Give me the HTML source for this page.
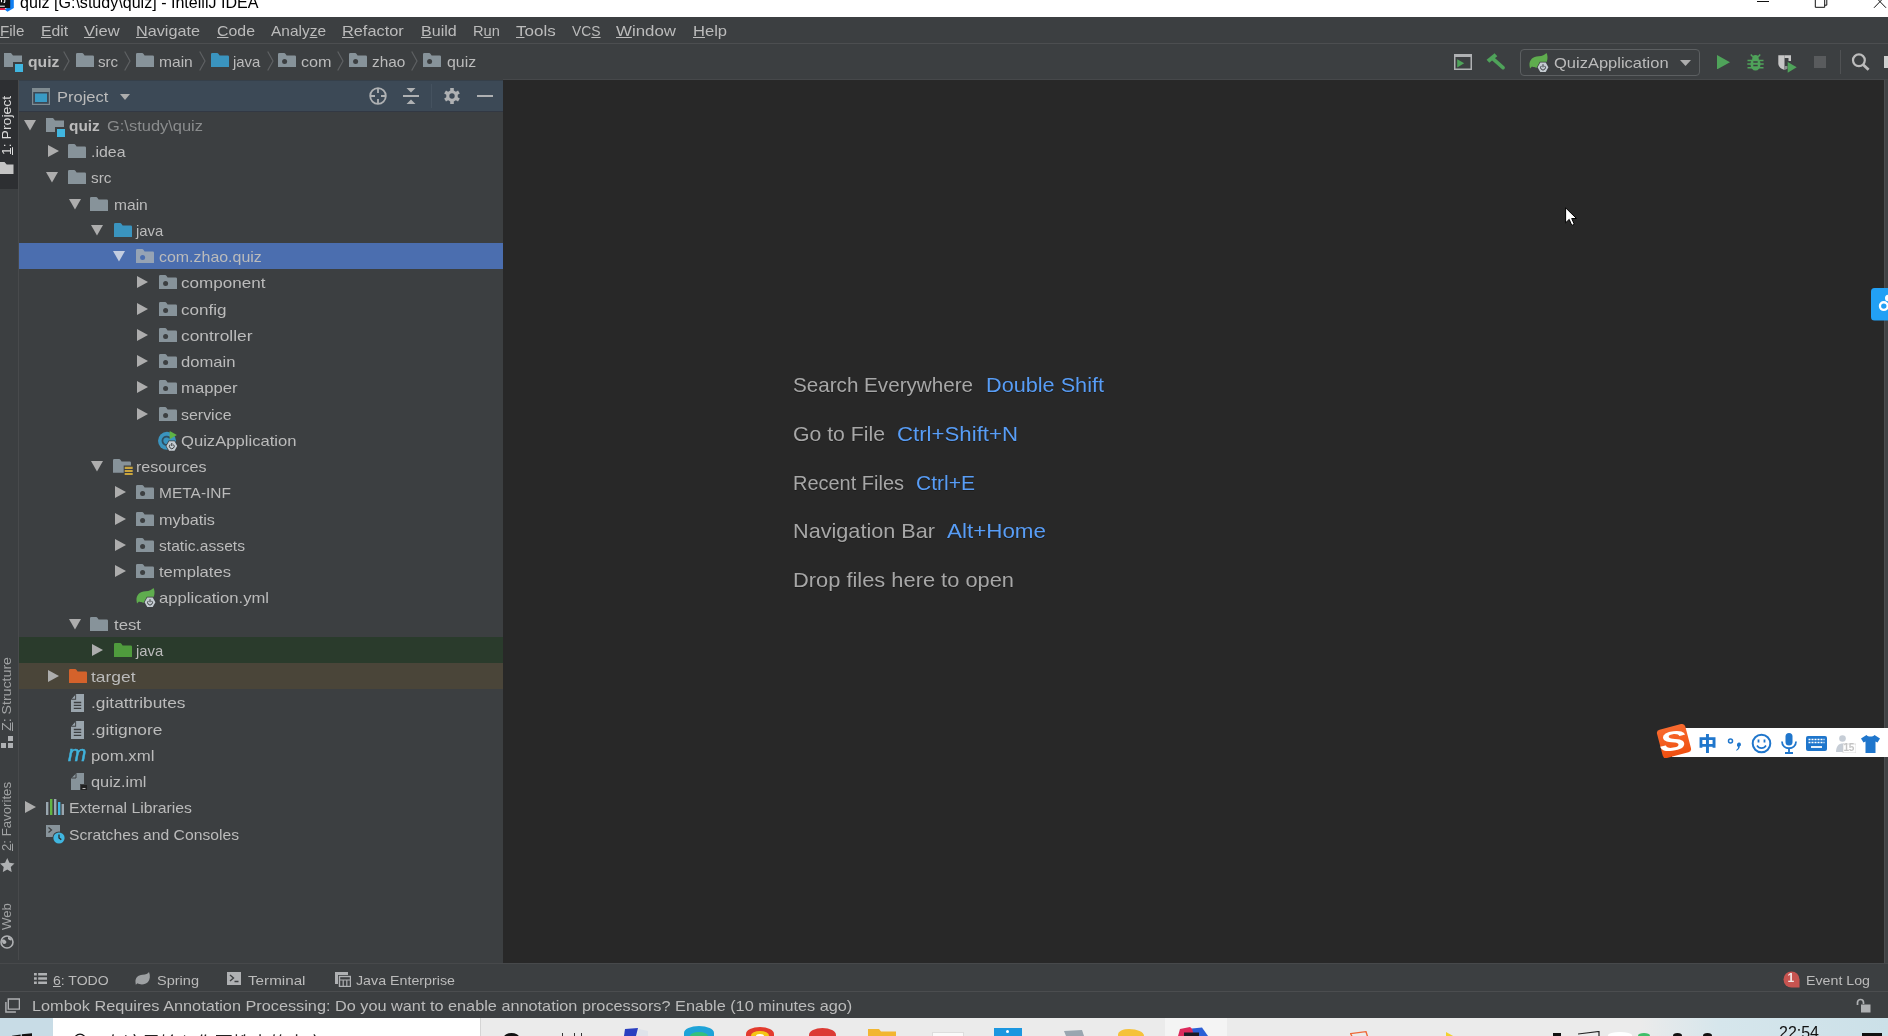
<!DOCTYPE html>
<html><head><meta charset="utf-8"><title>quiz [G:\study\quiz] - IntelliJ IDEA</title>
<style>
html,body{margin:0;padding:0}
body{width:1888px;height:1036px;overflow:hidden;position:relative;background:#3c3f41;font-family:"Liberation Sans", sans-serif}
.a{position:absolute;display:block}
.t{position:absolute;white-space:pre;line-height:20px;font-family:"Liberation Sans", sans-serif}
u{text-decoration:underline;text-underline-offset:1px;text-decoration-thickness:1px}
</style></head><body>
<div id="root" style="position:absolute;left:0;top:0;width:1888px;height:1036px;will-change:transform">
<div class="a" style="left:0px;top:0px;width:1888px;height:17px;background:#ffffff;"></div><svg class="a" style="left:0;top:0" width="14" height="12" viewBox="0 0 14 12"><path d="M9 0H13.800V8L7.500 11.700L4.500 9.500L9 7z" fill="#0f7ff2"/><path d="M0 7.500H4.500L5.500 10H0z" fill="#e8234f"/><rect x="0" y="0" width="10.200" height="8.100" fill="#111"/><rect x="0" y="5.700" width="4.800" height="1" fill="#fff"/><path d="M1.500 0v2.300M4.800 0v1.500q0 1-1.200 .9" stroke="#fff" stroke-width="1.100" fill="none"/></svg><span class="t" style="left:19.5px;top:-7.00px;font-size:17px;color:#000000;transform-origin:0 50%;transform:scaleX(0.9454);">quiz [G:\study\quiz] - IntelliJ IDEA</span><div class="a" style="left:1757px;top:1px;width:12px;height:1px;background:#111;"></div><svg class="a" style="left:1813px;top:0" width="16" height="10" viewBox="0 0 16 10"><path d="M2.300 -3V7.300H11.700V-3M11.700 5.200H13.800V-3" fill="none" stroke="#111" stroke-width="1"/></svg><svg class="a" style="left:1872px;top:0" width="16" height="10" viewBox="0 0 16 10"><path d="M2 7.800L14 -4.600M14 7.800L2 -4.600" fill="none" stroke="#111" stroke-width="1"/></svg><div class="a" style="left:0px;top:17px;width:1888px;height:27px;background:#3c3f41;"></div><div class="a" style="left:0px;top:43px;width:1888px;height:1px;background:#4c4e50;"></div><span class="t" style="left:0px;top:21.00px;font-size:14.6px;color:#bbbbbb;transform-origin:0 50%;transform:scaleX(1.0369);"><u>F</u>ile</span><span class="t" style="left:41.4px;top:21.00px;font-size:14.6px;color:#bbbbbb;transform-origin:0 50%;transform:scaleX(1.0812);"><u>E</u>dit</span><span class="t" style="left:84px;top:21.00px;font-size:14.6px;color:#bbbbbb;transform-origin:0 50%;transform:scaleX(1.1341);"><u>V</u>iew</span><span class="t" style="left:136px;top:21.00px;font-size:14.6px;color:#bbbbbb;transform-origin:0 50%;transform:scaleX(1.1109);"><u>N</u>avigate</span><span class="t" style="left:217px;top:21.00px;font-size:14.6px;color:#bbbbbb;transform-origin:0 50%;transform:scaleX(1.0886);"><u>C</u>ode</span><span class="t" style="left:271px;top:21.00px;font-size:14.6px;color:#bbbbbb;transform-origin:0 50%;transform:scaleX(1.0590);">Analy<u>z</u>e</span><span class="t" style="left:342.1px;top:21.00px;font-size:14.6px;color:#bbbbbb;transform-origin:0 50%;transform:scaleX(1.1183);"><u>R</u>efactor</span><span class="t" style="left:421px;top:21.00px;font-size:14.6px;color:#bbbbbb;transform-origin:0 50%;transform:scaleX(1.1000);"><u>B</u>uild</span><span class="t" style="left:472.8px;top:21.00px;font-size:14.6px;color:#bbbbbb;transform-origin:0 50%;transform:scaleX(1.0038);">R<u>u</u>n</span><span class="t" style="left:516.2px;top:21.00px;font-size:14.6px;color:#bbbbbb;transform-origin:0 50%;transform:scaleX(1.1650);"><u>T</u>ools</span><span class="t" style="left:572px;top:21.00px;font-size:14.6px;color:#bbbbbb;transform-origin:0 50%;transform:scaleX(0.9528);">VC<u>S</u></span><span class="t" style="left:616px;top:21.00px;font-size:14.6px;color:#bbbbbb;transform-origin:0 50%;transform:scaleX(1.1556);"><u>W</u>indow</span><span class="t" style="left:692.5px;top:21.00px;font-size:14.6px;color:#bbbbbb;transform-origin:0 50%;transform:scaleX(1.1355);"><u>H</u>elp</span><div class="a" style="left:0px;top:44px;width:1888px;height:36px;background:#3c3f41;"></div><svg class="a" style="left:4px;top:53px" width="20" height="19" viewBox="0 0 20 19"><path d="M0 0h7l2 2.6h9V9H9v5H0z" fill="#87939a"/><rect x="11" y="11" width="8" height="8" fill="#40b6e0"/></svg><span class="t" style="left:27.6px;top:52.00px;font-size:14.6px;color:#bbbbbb;font-weight:bold;transform-origin:0 50%;transform:scaleX(1.0758);">quiz</span><svg class="a" style="left:63px;top:51px" width="7" height="20" viewBox="0 0 7 20"><path d="M0.7 0.5L6 10L0.7 19.5" fill="none" stroke="#5e6163" stroke-width="1.2"/></svg><svg class="a" style="left:76px;top:53px" width="18" height="14" viewBox="0 0 18 14"><path d="M0 1.300Q0 0 1.300 0H6Q7 0 7.600 1L8.600 2.600H16.800Q18 2.600 18 3.800V14H0z" fill="#87939a"/></svg><span class="t" style="left:98.4px;top:52.00px;font-size:14.6px;color:#bbbbbb;transform-origin:0 50%;transform:scaleX(1.0376);">src</span><svg class="a" style="left:124px;top:51px" width="7" height="20" viewBox="0 0 7 20"><path d="M0.7 0.5L6 10L0.7 19.5" fill="none" stroke="#5e6163" stroke-width="1.2"/></svg><svg class="a" style="left:136px;top:53px" width="18" height="14" viewBox="0 0 18 14"><path d="M0 1.300Q0 0 1.300 0H6Q7 0 7.600 1L8.600 2.600H16.800Q18 2.600 18 3.800V14H0z" fill="#87939a"/></svg><span class="t" style="left:158.6px;top:52.00px;font-size:14.6px;color:#bbbbbb;transform-origin:0 50%;transform:scaleX(1.0682);">main</span><svg class="a" style="left:199px;top:51px" width="7" height="20" viewBox="0 0 7 20"><path d="M0.7 0.5L6 10L0.7 19.5" fill="none" stroke="#5e6163" stroke-width="1.2"/></svg><svg class="a" style="left:211px;top:53px" width="18" height="14" viewBox="0 0 18 14"><path d="M0 1.300Q0 0 1.300 0H6Q7 0 7.600 1L8.600 2.600H16.800Q18 2.600 18 3.800V14H0z" fill="#3a94bf"/></svg><span class="t" style="left:233px;top:52.00px;font-size:14.6px;color:#bbbbbb;transform-origin:0 50%;transform:scaleX(1.0231);">java</span><svg class="a" style="left:267px;top:51px" width="7" height="20" viewBox="0 0 7 20"><path d="M0.7 0.5L6 10L0.7 19.5" fill="none" stroke="#5e6163" stroke-width="1.2"/></svg><svg class="a" style="left:278px;top:53px" width="18" height="14" viewBox="0 0 18 14"><path d="M0 1.300Q0 0 1.300 0H6Q7 0 7.600 1L8.600 2.600H16.800Q18 2.600 18 3.800V14H0z" fill="#87939a"/><circle cx="6.600" cy="8.400" r="2.500" fill="#3c3f41"/></svg><span class="t" style="left:301.4px;top:52.00px;font-size:14.6px;color:#bbbbbb;transform-origin:0 50%;transform:scaleX(1.1096);">com</span><svg class="a" style="left:337px;top:51px" width="7" height="20" viewBox="0 0 7 20"><path d="M0.7 0.5L6 10L0.7 19.5" fill="none" stroke="#5e6163" stroke-width="1.2"/></svg><svg class="a" style="left:349px;top:53px" width="18" height="14" viewBox="0 0 18 14"><path d="M0 1.300Q0 0 1.300 0H6Q7 0 7.600 1L8.600 2.600H16.800Q18 2.600 18 3.800V14H0z" fill="#87939a"/><circle cx="6.600" cy="8.400" r="2.500" fill="#3c3f41"/></svg><span class="t" style="left:372.3px;top:52.00px;font-size:14.6px;color:#bbbbbb;transform-origin:0 50%;transform:scaleX(1.0519);">zhao</span><svg class="a" style="left:411px;top:51px" width="7" height="20" viewBox="0 0 7 20"><path d="M0.7 0.5L6 10L0.7 19.5" fill="none" stroke="#5e6163" stroke-width="1.2"/></svg><svg class="a" style="left:423px;top:53px" width="18" height="14" viewBox="0 0 18 14"><path d="M0 1.300Q0 0 1.300 0H6Q7 0 7.600 1L8.600 2.600H16.800Q18 2.600 18 3.800V14H0z" fill="#87939a"/><circle cx="6.600" cy="8.400" r="2.500" fill="#3c3f41"/></svg><span class="t" style="left:446.8px;top:52.00px;font-size:14.6px;color:#bbbbbb;transform-origin:0 50%;transform:scaleX(1.0866);">quiz</span><svg class="a" style="left:1454px;top:54px" width="18" height="16" viewBox="0 0 18 16"><path d="M0 0h18v16H0zM1.500 3v11.500h15V3z" fill="#afb1b3" fill-rule="evenodd"/><path d="M3.200 5.200v8.200l7-4.100z" fill="#4fa35a"/></svg><svg class="a" style="left:1486px;top:53px" width="19" height="17" viewBox="0 0 19 17"><g fill="#4fa35a" stroke="none"><path d="M0.600 6.800L8.600 0.300L11.300 3.300L3.300 9.800z"/></g><path d="M6.800 5.600L17 14.700" stroke="#4fa35a" stroke-width="3.600" stroke-linecap="round"/></svg><div class="a" style="left:1520px;top:48.5px;width:179.5px;height:27px;background:transparent;box-sizing:border-box;border:1px solid #5c5f61;border-radius:4px"></div><svg class="a" style="left:1528.5px;top:53px" width="21" height="21" viewBox="0 0 21 21"><path d="M0.500 12.500C0 7 4 3.500 9.500 3.300C13.500 3.100 15.500 2 17.500 0C19.500 4 18.500 9 15.500 12C12.500 15 6 15.500 3 13.500L1 15.500z" fill="#5fad4e"/><path d="M7.80 14.3L10.90 8.70H17.10L20.20 14.3L17.10 19.90H10.90z" fill="#3c3f41"/><path d="M8.60 14.3L11.30 9.50H16.70L19.40 14.3L16.70 19.10H11.30z" fill="#c5ccd2"/><path d="M14 11.20v3" stroke="#3c3f41" stroke-width="1.100"/><path d="M12.30 12.90a2.400 2.400 0 1 0 3.400 0" fill="none" stroke="#3c3f41" stroke-width="1"/></svg><span class="t" style="left:1553.9px;top:53.00px;font-size:14.6px;color:#bbbbbb;transform-origin:0 50%;transform:scaleX(1.1301);">QuizApplication</span><svg class="a" style="left:1679.5px;top:59.5px" width="11" height="6" viewBox="0 0 11 6"><path d="M0 0h11L5.5 6z" fill="#adadad"/></svg><svg class="a" style="left:1716.5px;top:55px" width="13" height="14" viewBox="0 0 13 14"><path d="M0 0v14.400L13 7.200z" fill="#4fa35a"/></svg><svg class="a" style="left:1746.500px;top:54px" width="17" height="17" viewBox="0 0 17 17"><g stroke="#4fa35a" stroke-width="1.500" fill="none"><path d="M5.800 2.800L3.800 0.500M11.200 2.800L13.200 0.500M0.500 6.500h16M0.300 10h16.400M0.500 13.700h16"/></g><circle cx="8.500" cy="4.200" r="3.200" fill="#4fa35a"/><ellipse cx="8.500" cy="10.200" rx="5" ry="6.300" fill="#4fa35a"/><path d="M6.300 8h4.400M6.300 11.500h4.400" stroke="#3c3f41" stroke-width="1.300"/></svg><svg class="a" style="left:1778px;top:54.500px" width="19" height="18" viewBox="0 0 19 18"><path d="M0.300 0.300H6.500V15C3.500 14 0.300 12 0.300 8.500z" fill="#c6c6c6"/><path d="M6.500 0.300H13V6H10.500V3H6.500z" fill="#c6c6c6"/><path d="M6.500 15C8 14.500 9 14 9.500 13.500V11H6.500z" fill="#8e9092"/><path d="M9.700 7v10.700l9-5.350z" fill="#4fa35a"/></svg><div class="a" style="left:1813.5px;top:56px;width:12.5px;height:12px;background:#595b5d;"></div><div class="a" style="left:1840px;top:50px;width:1px;height:24px;background:#505254;"></div><svg class="a" style="left:1851px;top:52px" width="20" height="20" viewBox="0 0 20 20"><circle cx="7.900" cy="8.300" r="5.900" fill="none" stroke="#bcbcbc" stroke-width="2.200"/><path d="M12.200 12.800l5.400 4.900" stroke="#bcbcbc" stroke-width="2.800"/></svg><div class="a" style="left:1884px;top:56px;width:4px;height:12px;background:#d0d0d0;"></div><div class="a" style="left:503px;top:80px;width:1381px;height:883px;background:#282828;"></div><div class="a" style="left:503px;top:79px;width:1385px;height:1px;background:#46484a;"></div><div class="a" style="left:1884px;top:80px;width:4px;height:883px;background:#404244;"></div><div class="a" style="left:1884px;top:80px;width:1px;height:883px;background:#4b4d4f;"></div><div class="a" style="left:0px;top:80px;width:18px;height:884px;background:#3c3f41;"></div><div class="a" style="left:0px;top:80px;width:18px;height:109px;background:#2d2f32;"></div><div class="a" style="left:18px;top:80px;width:1px;height:880px;background:#484a4c;"></div><div class="a" style="left:19px;top:80px;width:484px;height:884px;background:#3c3f41;"></div><div class="a" style="left:19px;top:80px;width:484px;height:1px;background:#36404a;"></div><div class="a" style="left:19px;top:81px;width:484px;height:30px;background:#3c4956;"></div><div class="a" style="left:19px;top:111px;width:484px;height:1px;background:#323843;"></div><span class="t" style="left:6.7px;top:154.8px;transform-origin:0 0;transform:rotate(-90deg) translate(0,-50%) scaleX(1.0625);font-size:13.2px;color:#dcdcdc;"><u>1</u>: Project</span><svg class="a" style="left:0;top:161.500px" width="13.500" height="12" viewBox="0 0 13.500 12"><path d="M0 0h4.500l2.200 2.600h6.800V12H0z" fill="#c4c4c4"/></svg><span class="t" style="left:6.7px;top:731px;transform-origin:0 0;transform:rotate(-90deg) translate(0,-50%) scaleX(1.0739);font-size:13.2px;color:#a0a2a3;"><u>Z</u>: Structure</span><svg class="a" style="left:1px;top:736px" width="12" height="12" viewBox="0 0 12 12"><rect x="0" y="7" width="5" height="5" fill="#afb1b3"/><rect x="7" y="7" width="5" height="5" fill="#afb1b3"/><rect x="7" y="0" width="5" height="5" fill="#afb1b3"/></svg><span class="t" style="left:6.7px;top:851px;transform-origin:0 0;transform:rotate(-90deg) translate(0,-50%) scaleX(1.0014);font-size:13.2px;color:#a0a2a3;"><u>2</u>: Favorites</span><svg class="a" style="left:0;top:857.500px" width="14.500" height="14.500" viewBox="0 0 14 14"><path d="M7 0l2.1 4.6 4.9.6-3.6 3.4.9 5L7 11.100 2.700 13.600l.9-5L0 5.200l4.900-.6z" fill="#afb1b3"/></svg><span class="t" style="left:6.7px;top:930px;transform-origin:0 0;transform:rotate(-90deg) translate(0,-50%) scaleX(1.0041);font-size:13.2px;color:#a0a2a3;">Web</span><svg class="a" style="left:0;top:935px" width="14" height="14" viewBox="0 0 14 14"><circle cx="7" cy="7" r="6" fill="none" stroke="#afb1b3" stroke-width="1.6"/><path d="M2 5c2-1 3 0 4 1s0 3-2 3-2-3-2-4zM8 2c2 0 3 1 4 3-1 1-3 0-4-1z" fill="#afb1b3"/></svg><svg class="a" style="left:32px;top:88px" width="18" height="17" viewBox="0 0 18 17"><rect x="0.5" y="0.5" width="17" height="16" fill="none" stroke="#7f8b91" stroke-width="1.4"/><rect x="0" y="0" width="18" height="4" fill="#7f8b91"/><rect x="3" y="5.5" width="12" height="8.5" fill="#3a9bc5"/></svg><span class="t" style="left:56.6px;top:87.00px;font-size:14.6px;color:#bbbbbb;transform-origin:0 50%;transform:scaleX(1.1316);">Project</span><svg class="a" style="left:120px;top:94px" width="10" height="6" viewBox="0 0 10 6"><path d="M0 0h10L5 6z" fill="#adadad"/></svg><svg class="a" style="left:369px;top:87px" width="18" height="18" viewBox="0 0 18 18"><circle cx="9" cy="9" r="7.8" fill="none" stroke="#afb1b3" stroke-width="1.8"/><path d="M9 1v5M9 12v5M1 9h5M12 9h5" stroke="#afb1b3" stroke-width="1.8"/></svg><svg class="a" style="left:403px;top:88px" width="16" height="16" viewBox="0 0 16 16"><path d="M3.5 0h9L8 4.5zM0 7h16v2H0zM3.500 16h9L8 11.500z" fill="#afb1b3"/></svg><div class="a" style="left:431px;top:84px;width:1px;height:24px;background:#45525f;"></div><svg class="a" style="left:444px;top:88px" width="16" height="16" viewBox="0 0 16 16"><g transform="translate(8 8)"><g fill="#afb1b3"><rect x="-1.8" y="-8" width="3.600" height="16"/><rect x="-1.8" y="-8" width="3.600" height="16" transform="rotate(60)"/><rect x="-1.8" y="-8" width="3.600" height="16" transform="rotate(120)"/><circle r="5.8"/></g><circle r="2.700" fill="#3c4956"/></g></svg><div class="a" style="left:477px;top:95px;width:16px;height:2px;background:#afb1b3;"></div><svg class="a" style="left:23.7px;top:120.4px" width="12" height="10.4" viewBox="0 0 12 10.4"><path d="M0 0h12L6 10.4z" fill="#adadad"/></svg><svg class="a" style="left:46.0px;top:118.1px" width="20" height="19" viewBox="0 0 20 19"><path d="M0 0h7l2 2.6h9V9H9v5H0z" fill="#87939a"/><rect x="11" y="11" width="8" height="8" fill="#40b6e0"/></svg><span class="t" style="left:68.6px;top:116.00px;font-size:14.6px;color:#bbbbbb;font-weight:bold;transform-origin:0 50%;transform:scaleX(1.0552);">quiz</span><span class="t" style="left:107.4px;top:116.00px;font-size:14.6px;color:#8a8c8d;transform-origin:0 50%;transform:scaleX(1.1271);">G:\study\quiz</span><svg class="a" style="left:47.6px;top:145.2px" width="11" height="12" viewBox="0 0 11 12"><path d="M0 0v12L11 6z" fill="#adadad"/></svg><svg class="a" style="left:67.9px;top:144.1px" width="18" height="14" viewBox="0 0 18 14"><path d="M0 1.300Q0 0 1.300 0H6Q7 0 7.600 1L8.600 2.600H16.800Q18 2.600 18 3.800V14H0z" fill="#87939a"/></svg><span class="t" style="left:91.1px;top:142.00px;font-size:14.6px;color:#bbbbbb;transform-origin:0 50%;transform:scaleX(1.0898);">.idea</span><svg class="a" style="left:46.1px;top:172.4px" width="12" height="10.4" viewBox="0 0 12 10.4"><path d="M0 0h12L6 10.4z" fill="#adadad"/></svg><svg class="a" style="left:67.9px;top:170.1px" width="18" height="14" viewBox="0 0 18 14"><path d="M0 1.300Q0 0 1.300 0H6Q7 0 7.600 1L8.600 2.600H16.800Q18 2.600 18 3.800V14H0z" fill="#87939a"/></svg><span class="t" style="left:91.1px;top:168.00px;font-size:14.6px;color:#bbbbbb;transform-origin:0 50%;transform:scaleX(1.0530);">src</span><svg class="a" style="left:68.5px;top:199.4px" width="12" height="10.4" viewBox="0 0 12 10.4"><path d="M0 0h12L6 10.4z" fill="#adadad"/></svg><svg class="a" style="left:90.4px;top:197.1px" width="18" height="14" viewBox="0 0 18 14"><path d="M0 1.300Q0 0 1.300 0H6Q7 0 7.600 1L8.600 2.600H16.800Q18 2.600 18 3.800V14H0z" fill="#87939a"/></svg><span class="t" style="left:113.6px;top:195.00px;font-size:14.6px;color:#bbbbbb;transform-origin:0 50%;transform:scaleX(1.0682);">main</span><svg class="a" style="left:90.9px;top:225.4px" width="12" height="10.4" viewBox="0 0 12 10.4"><path d="M0 0h12L6 10.4z" fill="#adadad"/></svg><svg class="a" style="left:113.5px;top:223.1px" width="18" height="14" viewBox="0 0 18 14"><path d="M0 1.300Q0 0 1.300 0H6Q7 0 7.600 1L8.600 2.600H16.800Q18 2.600 18 3.800V14H0z" fill="#3a94bf"/></svg><span class="t" style="left:136.1px;top:221.00px;font-size:14.6px;color:#bbbbbb;transform-origin:0 50%;transform:scaleX(1.0194);">java</span><div class="a" style="left:19px;top:243px;width:484px;height:26px;background:#4b6eaf;"></div><svg class="a" style="left:113.3px;top:251.4px" width="12" height="10.4" viewBox="0 0 12 10.4"><path d="M0 0h12L6 10.4z" fill="#c3cde0"/></svg><svg class="a" style="left:136.0px;top:249.1px" width="18" height="14" viewBox="0 0 18 14"><path d="M0 1.300Q0 0 1.300 0H6Q7 0 7.600 1L8.600 2.600H16.800Q18 2.600 18 3.800V14H0z" fill="#96a3b4"/><circle cx="6.600" cy="8.400" r="2.500" fill="#4b6eaf"/></svg><span class="t" style="left:158.6px;top:247.00px;font-size:14.6px;color:#bbbbbb;transform-origin:0 50%;transform:scaleX(1.0923);">com.zhao.quiz</span><svg class="a" style="left:137.2px;top:276.2px" width="11" height="12" viewBox="0 0 11 12"><path d="M0 0v12L11 6z" fill="#adadad"/></svg><svg class="a" style="left:158.5px;top:275.1px" width="18" height="14" viewBox="0 0 18 14"><path d="M0 1.300Q0 0 1.300 0H6Q7 0 7.600 1L8.600 2.600H16.800Q18 2.600 18 3.800V14H0z" fill="#87939a"/><circle cx="6.600" cy="8.400" r="2.500" fill="#3c3f41"/></svg><span class="t" style="left:181.1px;top:273.00px;font-size:14.6px;color:#bbbbbb;transform-origin:0 50%;transform:scaleX(1.1701);">component</span><svg class="a" style="left:137.2px;top:303.2px" width="11" height="12" viewBox="0 0 11 12"><path d="M0 0v12L11 6z" fill="#adadad"/></svg><svg class="a" style="left:158.5px;top:302.1px" width="18" height="14" viewBox="0 0 18 14"><path d="M0 1.300Q0 0 1.300 0H6Q7 0 7.600 1L8.600 2.600H16.800Q18 2.600 18 3.800V14H0z" fill="#87939a"/><circle cx="6.600" cy="8.400" r="2.500" fill="#3c3f41"/></svg><span class="t" style="left:181.1px;top:300.00px;font-size:14.6px;color:#bbbbbb;transform-origin:0 50%;transform:scaleX(1.1681);">config</span><svg class="a" style="left:137.2px;top:329.2px" width="11" height="12" viewBox="0 0 11 12"><path d="M0 0v12L11 6z" fill="#adadad"/></svg><svg class="a" style="left:158.5px;top:328.1px" width="18" height="14" viewBox="0 0 18 14"><path d="M0 1.300Q0 0 1.300 0H6Q7 0 7.600 1L8.600 2.600H16.800Q18 2.600 18 3.800V14H0z" fill="#87939a"/><circle cx="6.600" cy="8.400" r="2.500" fill="#3c3f41"/></svg><span class="t" style="left:181.1px;top:326.00px;font-size:14.6px;color:#bbbbbb;transform-origin:0 50%;transform:scaleX(1.1910);">controller</span><svg class="a" style="left:137.2px;top:355.2px" width="11" height="12" viewBox="0 0 11 12"><path d="M0 0v12L11 6z" fill="#adadad"/></svg><svg class="a" style="left:158.5px;top:354.1px" width="18" height="14" viewBox="0 0 18 14"><path d="M0 1.300Q0 0 1.300 0H6Q7 0 7.600 1L8.600 2.600H16.800Q18 2.600 18 3.800V14H0z" fill="#87939a"/><circle cx="6.600" cy="8.400" r="2.500" fill="#3c3f41"/></svg><span class="t" style="left:181.1px;top:352.00px;font-size:14.6px;color:#bbbbbb;transform-origin:0 50%;transform:scaleX(1.1384);">domain</span><svg class="a" style="left:137.2px;top:381.2px" width="11" height="12" viewBox="0 0 11 12"><path d="M0 0v12L11 6z" fill="#adadad"/></svg><svg class="a" style="left:158.5px;top:380.1px" width="18" height="14" viewBox="0 0 18 14"><path d="M0 1.300Q0 0 1.300 0H6Q7 0 7.600 1L8.600 2.600H16.800Q18 2.600 18 3.800V14H0z" fill="#87939a"/><circle cx="6.600" cy="8.400" r="2.500" fill="#3c3f41"/></svg><span class="t" style="left:181.1px;top:378.00px;font-size:14.6px;color:#bbbbbb;transform-origin:0 50%;transform:scaleX(1.1418);">mapper</span><svg class="a" style="left:137.2px;top:408.2px" width="11" height="12" viewBox="0 0 11 12"><path d="M0 0v12L11 6z" fill="#adadad"/></svg><svg class="a" style="left:158.5px;top:407.1px" width="18" height="14" viewBox="0 0 18 14"><path d="M0 1.300Q0 0 1.300 0H6Q7 0 7.600 1L8.600 2.600H16.800Q18 2.600 18 3.800V14H0z" fill="#87939a"/><circle cx="6.600" cy="8.400" r="2.500" fill="#3c3f41"/></svg><span class="t" style="left:181.1px;top:405.00px;font-size:14.6px;color:#bbbbbb;transform-origin:0 50%;transform:scaleX(1.0923);">service</span><svg class="a" style="left:158.2px;top:430.6px" width="21" height="21" viewBox="0 0 21 21"><circle cx="9" cy="9.800" r="9" fill="#3a94bf"/><path d="M12 7.300a4.200 4.200 0 1 0 0 5" fill="none" stroke="#2f4f62" stroke-width="1.800"/><path d="M11.700 0v8.200l7.200-4.100z" fill="#5fb345"/><path d="M7.60 15L10.70 9.40H16.90L20.00 15L16.90 20.60H10.70z" fill="#3c3f41"/><path d="M8.40 15L11.10 10.20H16.50L19.20 15L16.50 19.80H11.10z" fill="#c5ccd2"/><path d="M13.8 11.90v3" stroke="#3c3f41" stroke-width="1.100"/><path d="M12.10 13.60a2.400 2.400 0 1 0 3.400 0" fill="none" stroke="#3c3f41" stroke-width="1"/></svg><span class="t" style="left:181.1px;top:431.00px;font-size:14.6px;color:#bbbbbb;transform-origin:0 50%;transform:scaleX(1.1390);">QuizApplication</span><svg class="a" style="left:90.9px;top:461.4px" width="12" height="10.4" viewBox="0 0 12 10.4"><path d="M0 0h12L6 10.4z" fill="#adadad"/></svg><svg class="a" style="left:113.0px;top:459.1px" width="20" height="18" viewBox="0 0 20 18"><path d="M0 1.300Q0 0 1.300 0H6Q7 0 7.600 1L8.600 2.600H16.800Q18 2.600 18 3.800V6.500H10.700V13.800H0z" fill="#87939a"/><path d="M11.700 7.800h8v2.100h-8zM11.700 10.900h8v2.100h-8zM11.700 14h8v2.100h-8z" fill="#c9a53e"/></svg><span class="t" style="left:136.1px;top:457.00px;font-size:14.6px;color:#bbbbbb;transform-origin:0 50%;transform:scaleX(1.1002);">resources</span><svg class="a" style="left:114.8px;top:486.2px" width="11" height="12" viewBox="0 0 11 12"><path d="M0 0v12L11 6z" fill="#adadad"/></svg><svg class="a" style="left:136.0px;top:485.1px" width="18" height="14" viewBox="0 0 18 14"><path d="M0 1.300Q0 0 1.300 0H6Q7 0 7.600 1L8.600 2.600H16.800Q18 2.600 18 3.800V14H0z" fill="#87939a"/><circle cx="6.600" cy="8.400" r="2.500" fill="#3c3f41"/></svg><span class="t" style="left:158.6px;top:483.00px;font-size:14.6px;color:#bbbbbb;transform-origin:0 50%;transform:scaleX(1.0615);">META-INF</span><svg class="a" style="left:114.8px;top:513.2px" width="11" height="12" viewBox="0 0 11 12"><path d="M0 0v12L11 6z" fill="#adadad"/></svg><svg class="a" style="left:136.0px;top:512.1px" width="18" height="14" viewBox="0 0 18 14"><path d="M0 1.300Q0 0 1.300 0H6Q7 0 7.600 1L8.600 2.600H16.800Q18 2.600 18 3.800V14H0z" fill="#87939a"/><circle cx="6.600" cy="8.400" r="2.500" fill="#3c3f41"/></svg><span class="t" style="left:158.6px;top:510.00px;font-size:14.6px;color:#bbbbbb;transform-origin:0 50%;transform:scaleX(1.1137);">mybatis</span><svg class="a" style="left:114.8px;top:539.2px" width="11" height="12" viewBox="0 0 11 12"><path d="M0 0v12L11 6z" fill="#adadad"/></svg><svg class="a" style="left:136.0px;top:538.1px" width="18" height="14" viewBox="0 0 18 14"><path d="M0 1.300Q0 0 1.300 0H6Q7 0 7.600 1L8.600 2.600H16.800Q18 2.600 18 3.800V14H0z" fill="#87939a"/><circle cx="6.600" cy="8.400" r="2.500" fill="#3c3f41"/></svg><span class="t" style="left:158.6px;top:536.00px;font-size:14.6px;color:#bbbbbb;transform-origin:0 50%;transform:scaleX(1.0710);">static.assets</span><svg class="a" style="left:114.8px;top:565.2px" width="11" height="12" viewBox="0 0 11 12"><path d="M0 0v12L11 6z" fill="#adadad"/></svg><svg class="a" style="left:136.0px;top:564.1px" width="18" height="14" viewBox="0 0 18 14"><path d="M0 1.300Q0 0 1.300 0H6Q7 0 7.600 1L8.600 2.600H16.800Q18 2.600 18 3.800V14H0z" fill="#87939a"/><circle cx="6.600" cy="8.400" r="2.500" fill="#3c3f41"/></svg><span class="t" style="left:158.6px;top:562.00px;font-size:14.6px;color:#bbbbbb;transform-origin:0 50%;transform:scaleX(1.1378);">templates</span><svg class="a" style="left:136.0px;top:587.6px" width="21" height="21" viewBox="0 0 21 21"><path d="M0.500 12.500C0 7 4 3.500 9.500 3.300C13.500 3.100 15.500 2 17.500 0C19.500 4 18.500 9 15.500 12C12.500 15 6 15.500 3 13.500L1 15.500z" fill="#5fad4e"/><path d="M7.80 14.3L10.90 8.70H17.10L20.20 14.3L17.10 19.90H10.90z" fill="#3c3f41"/><path d="M8.60 14.3L11.30 9.50H16.70L19.40 14.3L16.70 19.10H11.30z" fill="#c5ccd2"/><path d="M14 11.20v3" stroke="#3c3f41" stroke-width="1.100"/><path d="M12.30 12.90a2.400 2.400 0 1 0 3.400 0" fill="none" stroke="#3c3f41" stroke-width="1"/></svg><span class="t" style="left:158.6px;top:588.00px;font-size:14.6px;color:#bbbbbb;transform-origin:0 50%;transform:scaleX(1.1395);">application.yml</span><svg class="a" style="left:68.5px;top:619.4px" width="12" height="10.4" viewBox="0 0 12 10.4"><path d="M0 0h12L6 10.4z" fill="#adadad"/></svg><svg class="a" style="left:90.4px;top:617.1px" width="18" height="14" viewBox="0 0 18 14"><path d="M0 1.300Q0 0 1.300 0H6Q7 0 7.600 1L8.600 2.600H16.800Q18 2.600 18 3.800V14H0z" fill="#87939a"/></svg><span class="t" style="left:113.6px;top:615.00px;font-size:14.6px;color:#bbbbbb;transform-origin:0 50%;transform:scaleX(1.1474);">test</span><div class="a" style="left:19px;top:637px;width:484px;height:26px;background:#2a3b2c;"></div><svg class="a" style="left:92.4px;top:644.2px" width="11" height="12" viewBox="0 0 11 12"><path d="M0 0v12L11 6z" fill="#adadad"/></svg><svg class="a" style="left:113.5px;top:643.1px" width="18" height="14" viewBox="0 0 18 14"><path d="M0 1.300Q0 0 1.300 0H6Q7 0 7.600 1L8.600 2.600H16.800Q18 2.600 18 3.800V14H0z" fill="#4f9b3d"/></svg><span class="t" style="left:136.1px;top:641.00px;font-size:14.6px;color:#bbbbbb;transform-origin:0 50%;transform:scaleX(1.0194);">java</span><div class="a" style="left:19px;top:663px;width:484px;height:26px;background:#4a4539;"></div><svg class="a" style="left:47.6px;top:670.2px" width="11" height="12" viewBox="0 0 11 12"><path d="M0 0v12L11 6z" fill="#adadad"/></svg><svg class="a" style="left:68.5px;top:669.1px" width="18" height="14" viewBox="0 0 18 14"><path d="M0 1.300Q0 0 1.300 0H6Q7 0 7.600 1L8.600 2.600H16.800Q18 2.600 18 3.800V14H0z" fill="#d4622b"/></svg><span class="t" style="left:91.1px;top:667.00px;font-size:14.6px;color:#bbbbbb;transform-origin:0 50%;transform:scaleX(1.1921);">target</span><svg class="a" style="left:71.0px;top:693.6px" width="13" height="18" viewBox="0 0 14 17" preserveAspectRatio="none"><path d="M5.500 0H14V17H0V5.500z" fill="#9aa5ad"/><path d="M0 5.500L5.500 0V5.500z" fill="#3c3f41" opacity=".0"/><path d="M5 0.300V5H0.300" fill="none" stroke="#3c3f41" stroke-width="1"/><path d="M3 8h8M3 10.800h8M3 13.600h8" stroke="#3c3f41" stroke-width="1.300"/></svg><span class="t" style="left:91.1px;top:693.00px;font-size:14.6px;color:#bbbbbb;transform-origin:0 50%;transform:scaleX(1.1887);">.gitattributes</span><svg class="a" style="left:71.0px;top:720.6px" width="13" height="18" viewBox="0 0 14 17" preserveAspectRatio="none"><path d="M5.500 0H14V17H0V5.500z" fill="#9aa5ad"/><path d="M0 5.500L5.500 0V5.500z" fill="#3c3f41" opacity=".0"/><path d="M5 0.300V5H0.300" fill="none" stroke="#3c3f41" stroke-width="1"/><path d="M3 8h8M3 10.800h8M3 13.600h8" stroke="#3c3f41" stroke-width="1.300"/></svg><span class="t" style="left:91.1px;top:720.00px;font-size:14.6px;color:#bbbbbb;transform-origin:0 50%;transform:scaleX(1.1907);">.gitignore</span><span class="t" style="left:68.0px;top:744.3px;font-size:22px;line-height:20px;font-style:italic;color:#40b3dc;-webkit-text-stroke:0.500px #40b3dc">m</span><span class="t" style="left:91.1px;top:746.00px;font-size:14.6px;color:#bbbbbb;transform-origin:0 50%;transform:scaleX(1.1516);">pom.xml</span><svg class="a" style="left:70.5px;top:773.1px" width="16" height="17" viewBox="0 0 16 17"><path d="M5.500 0H13V11H9V17H0V5.500z" fill="#87939a"/><path d="M5 0.300V5H0.300" fill="none" stroke="#3c3f41" stroke-width="1"/><rect x="10" y="12" width="6" height="5" fill="#222"/><rect x="11.500" y="15" width="3" height="1" fill="#bbb"/></svg><span class="t" style="left:91.1px;top:772.00px;font-size:14.6px;color:#bbbbbb;transform-origin:0 50%;transform:scaleX(1.1219);">quiz.iml</span><svg class="a" style="left:25.2px;top:801.2px" width="11" height="12" viewBox="0 0 11 12"><path d="M0 0v12L11 6z" fill="#adadad"/></svg><svg class="a" style="left:46.0px;top:799.1px" width="18" height="16" viewBox="0 0 18 16"><rect x="0" y="3" width="2.400" height="13" fill="#9aa7b0"/><rect x="4" y="0" width="2.400" height="16" fill="#62b543"/><rect x="8" y="0" width="2.400" height="16" fill="#9aa7b0"/><rect x="12" y="3" width="2.400" height="13" fill="#40b6e0"/><rect x="15.600" y="5" width="2.400" height="11" fill="#9aa7b0"/></svg><span class="t" style="left:68.6px;top:798.00px;font-size:14.6px;color:#bbbbbb;transform-origin:0 50%;transform:scaleX(1.0831);">External Libraries</span><svg class="a" style="left:46.0px;top:825.1px" width="20" height="20" viewBox="0 0 20 20"><rect x="0" y="0" width="14" height="12" fill="#87939a"/><path d="M2.500 2.500l3 2.500-3 2.500" fill="none" stroke="#3c3f41" stroke-width="1.300"/><circle cx="13" cy="13" r="6.600" fill="#3c3f41"/><circle cx="13" cy="13" r="5.600" fill="#40b6e0"/><path d="M13 9.500V13l2.300 1.600" fill="none" stroke="#2b2b2b" stroke-width="1.300"/></svg><span class="t" style="left:68.6px;top:825.00px;font-size:14.6px;color:#bbbbbb;transform-origin:0 50%;transform:scaleX(1.0747);">Scratches and Consoles</span><span class="t" style="left:793px;top:375.00px;font-size:21px;color:#a7a7a7;transform-origin:0 50%;transform:scaleX(0.9823);text-shadow:0 1px 0 #1c1c1c;">Search Everywhere</span><span class="t" style="left:986px;top:375.00px;font-size:21px;color:#589df6;transform-origin:0 50%;transform:scaleX(1.0314);text-shadow:0 1px 0 #1c1c1c;">Double Shift</span><span class="t" style="left:793px;top:424.00px;font-size:21px;color:#a7a7a7;transform-origin:0 50%;transform:scaleX(1.0105);text-shadow:0 1px 0 #1c1c1c;">Go to File</span><span class="t" style="left:897px;top:424.00px;font-size:21px;color:#589df6;transform-origin:0 50%;transform:scaleX(1.0579);text-shadow:0 1px 0 #1c1c1c;">Ctrl+Shift+N</span><span class="t" style="left:793px;top:473.00px;font-size:21px;color:#a7a7a7;transform-origin:0 50%;transform:scaleX(0.9510);text-shadow:0 1px 0 #1c1c1c;">Recent Files</span><span class="t" style="left:916px;top:473.00px;font-size:21px;color:#589df6;transform-origin:0 50%;transform:scaleX(1.0011);text-shadow:0 1px 0 #1c1c1c;">Ctrl+E</span><span class="t" style="left:793px;top:521.00px;font-size:21px;color:#a7a7a7;transform-origin:0 50%;transform:scaleX(1.0309);text-shadow:0 1px 0 #1c1c1c;">Navigation Bar</span><span class="t" style="left:947px;top:521.00px;font-size:21px;color:#589df6;transform-origin:0 50%;transform:scaleX(1.0668);text-shadow:0 1px 0 #1c1c1c;">Alt+Home</span><span class="t" style="left:793px;top:570.00px;font-size:21px;color:#a7a7a7;transform-origin:0 50%;transform:scaleX(1.0402);text-shadow:0 1px 0 #1c1c1c;">Drop files here to open</span><svg class="a" style="left:1871px;top:288px" width="17" height="32.500" viewBox="0 0 17 32.500"><path d="M3.500 0H17V32.500H3.500a3.500 3.500 0 0 1-3.500-3.500V3.500a3.500 3.500 0 0 1 3.500-3.500z" fill="#22a0f5"/><circle cx="12.800" cy="18.100" r="3.850" fill="none" stroke="#fff" stroke-width="2.300"/><circle cx="17.300" cy="10" r="3.300" fill="#fff"/></svg><svg class="a" style="left:1565px;top:207px" width="13" height="20" viewBox="0 0 13 20"><path d="M0.600 0.800V15.800L4.200 12.400L6.800 18.400L9.300 17.300L6.700 11.500H11.500z" fill="#fff" stroke="#000" stroke-width="1"/></svg><div class="a" style="left:1672px;top:728px;width:216px;height:29px;background:#ffffff;"></div><svg class="a" style="left:1653.700px;top:720.500px" width="40" height="40" viewBox="0 0 40 40"><defs><linearGradient id="sg" x1="0" y1="0" x2="0" y2="1"><stop offset="0" stop-color="#f86a2e"/><stop offset="1" stop-color="#ef4f10"/></linearGradient></defs><g transform="rotate(-14.700 20 20)"><rect x="5.400" y="5.400" width="29.200" height="29.200" rx="3.500" fill="url(#sg)"/></g></svg><span class="t" style="left:1661px;top:724.500px;font-size:35px;line-height:32px;font-weight:bold;font-style:italic;color:#fff;transform:rotate(-6deg) scale(1.150,.780)">S</span><span class="t" style="left:1698px;top:734.500px;font-size:19px;line-height:20px;font-weight:900;color:#1f76cc;font-family:'Liberation Sans','Noto Sans CJK SC',sans-serif">中</span><svg class="a" style="left:1727px;top:737px" width="16" height="18" viewBox="0 0 16 18"><circle cx="3.500" cy="4" r="2" fill="none" stroke="#1f76cc" stroke-width="1.500"/><path d="M10 7.500a2 2 0 1 1 2.800 1.800c0 2-1.500 3.700-3.300 4.500l-.5-.9c1.200-.7 2-1.800 2.100-3A2 2 0 0 1 10 7.500z" fill="#1f76cc"/></svg><svg class="a" style="left:1751px;top:733px" width="21" height="21" viewBox="0 0 21 21"><circle cx="10.500" cy="10.500" r="8.800" fill="none" stroke="#1f76cc" stroke-width="2"/><path d="M7.500 6.500v3M13.500 6.500v3" stroke="#1f76cc" stroke-width="1.800"/><path d="M6 12.500c2 3.500 7 3.500 9 0" fill="none" stroke="#1f76cc" stroke-width="1.600"/></svg><svg class="a" style="left:1781px;top:733px" width="16" height="21" viewBox="0 0 16 21"><rect x="4.500" y="0" width="7" height="12.500" rx="3.500" fill="#1f76cc"/><path d="M1 8.500c0 9 14 9 14 0" fill="none" stroke="#1f76cc" stroke-width="1.800"/><path d="M8 15.500v4M4 20h8" stroke="#1f76cc" stroke-width="1.800"/></svg><svg class="a" style="left:1806px;top:736px" width="21" height="15" viewBox="0 0 21 15"><rect x="0" y="0" width="21" height="15" rx="2" fill="#1f76cc"/><path d="M2.500 3.500h16M2.500 6.500h16" stroke="#fff" stroke-width="1.600" stroke-dasharray="2 1"/><path d="M5 11h11" stroke="#fff" stroke-width="1.800"/></svg><svg class="a" style="left:1835px;top:735px" width="21" height="18" viewBox="0 0 21 18"><circle cx="7.500" cy="3.500" r="3.300" fill="#c6cdd6"/><path d="M1 17c0-6 3-8.500 6.500-8.500S14 11 14 17z" fill="#c6cdd6"/><rect x="8" y="9" width="13" height="9" fill="#fff" stroke="#c9c9c9" stroke-width=".6"/></svg><span class="t" style="left:1843.500px;top:743px;font-size:10px;line-height:10px;font-weight:bold;color:#c4c4c4;letter-spacing:-.3px">15</span><svg class="a" style="left:1861px;top:735px" width="19" height="18" viewBox="0 0 19 18"><path d="M5.500 0c1.500 2 6.500 2 8 0l5.500 3.500-2.500 4-2-1V18H4.500V6.500l-2 1L0 3.500z" fill="#1f76cc"/></svg><div class="a" style="left:0px;top:963px;width:1888px;height:29px;background:#3c3f41;"></div><div class="a" style="left:0px;top:963px;width:1888px;height:1px;background:#47494b;"></div><svg class="a" style="left:34px;top:973px" width="13" height="11" viewBox="0 0 14 11" preserveAspectRatio="none"><path d="M0 0h3v2.400H0zM4.500 0H14v2.400H4.500zM0 4.300h3v2.400H0zM4.500 4.300H14v2.400H4.500zM0 8.600h3V11H0zM4.500 8.600H14V11H4.500z" fill="#afb1b3"/></svg><span class="t" style="left:53px;top:971.00px;font-size:13.3px;color:#bbbbbb;transform-origin:0 50%;transform:scaleX(1.0562);"><u>6</u>: TODO</span><svg class="a" style="left:135px;top:972px" width="16" height="13" viewBox="0 0 16 13"><path d="M0.500 10.500C0 6 3 3 7.500 2.800C11 2.600 12.500 1.800 14 0C15.500 3.500 15 7.500 13 10C10.500 13 5 13 2.500 11.300L0.800 12.800z" fill="#9da0a2"/></svg><span class="t" style="left:156.7px;top:971.00px;font-size:13.3px;color:#bbbbbb;transform-origin:0 50%;transform:scaleX(1.0927);">Spring</span><svg class="a" style="left:227px;top:972px" width="14" height="13" viewBox="0 0 14 13"><rect width="14" height="13" fill="#afb1b3"/><path d="M3 3l3.500 3L3 9M7.500 9.500h4" fill="none" stroke="#3c3f41" stroke-width="1.400"/></svg><span class="t" style="left:247.5px;top:971.00px;font-size:13.3px;color:#bbbbbb;transform-origin:0 50%;transform:scaleX(1.1443);">Terminal</span><svg class="a" style="left:335px;top:972px" width="16" height="15" viewBox="0 0 16 15"><path d="M0 0h13v3H3v9H0z" fill="#afb1b3"/><rect x="4.500" y="4.500" width="11" height="10" fill="none" stroke="#afb1b3" stroke-width="1.400"/><path d="M4.500 8h11M8.200 8v6.500M11.800 8v6.500" stroke="#afb1b3" stroke-width="1.200"/></svg><span class="t" style="left:356px;top:971.00px;font-size:13.3px;color:#bbbbbb;transform-origin:0 50%;transform:scaleX(1.0715);">Java Enterprise</span><svg class="a" style="left:1783px;top:971px" width="17" height="17" viewBox="0 0 17 17"><path d="M8.500 0.500a8 8 0 1 0 0 16h8v-8a8 8 0 0 0-8-8z" fill="#c75450"/></svg><span class="t" style="left:1787.500px;top:970px;font-size:12px;line-height:16px;font-weight:bold;color:#f2e6e5">1</span><span class="t" style="left:1806px;top:971.00px;font-size:13.3px;color:#bbbbbb;transform-origin:0 50%;transform:scaleX(1.0686);">Event Log</span><div class="a" style="left:0px;top:991px;width:1888px;height:27px;background:#3c3f41;"></div><div class="a" style="left:0px;top:991px;width:1888px;height:1px;background:#4b4d4f;"></div><svg class="a" style="left:3.600px;top:998px" width="16.200" height="15.600" viewBox="0 0 17 16"><path d="M4.500 0.800H16.200V11.500H4.500z" fill="none" stroke="#afb1b3" stroke-width="1.500"/><path d="M2 4V14.500H12.500" fill="none" stroke="#afb1b3" stroke-width="1.500"/></svg><span class="t" style="left:31.7px;top:996.00px;font-size:14.6px;color:#bbbbbb;transform-origin:0 50%;transform:scaleX(1.1148);">Lombok Requires Annotation Processing: Do you want to enable annotation processors? Enable (10 minutes ago)</span><svg class="a" style="left:1856px;top:998px" width="15" height="15" viewBox="0 0 15 15"><path d="M1.500 7V4.500a3 3 0 0 1 6 0V6" fill="none" stroke="#afb1b3" stroke-width="1.700"/><rect x="5" y="6.500" width="9.500" height="8" fill="#afb1b3"/></svg><div class="a" style="left:0;top:1018px;width:1888px;height:18px;background:linear-gradient(90deg,#ebebeb 0,#ebebeb 1640px,#d6e6ec 1720px,#cbe0e8 1888px)"></div><div class="a" style="left:0px;top:1018px;width:53px;height:18px;background:#c8dce6;"></div><div class="a" style="left:53px;top:1018px;width:427px;height:18px;background:#ffffff;"></div><div class="a" style="left:480px;top:1018px;width:1px;height:18px;background:#d5d5d5;"></div><svg class="a" style="left:12px;top:1032.500px" width="20" height="4" viewBox="0 0 22 4"><path d="M0 2.800L9.500 1.500V4H0zM10.800 1.300L22 0V4H10.800z" fill="#111"/></svg><svg class="a" style="left:73px;top:1033px" width="14" height="4" viewBox="0 0 14 4"><circle cx="7" cy="7" r="5.800" fill="none" stroke="#111" stroke-width="1.300"/></svg><span class="t" style="left:105.5px;top:1032.5px;font-size:18.2px;line-height:22px;color:#222;font-family:'Liberation Sans','Noto Sans CJK SC',sans-serif">在这里输入你要搜索的内容</span><div class="a" style="left:1165px;top:1018px;width:62px;height:18px;background:#f4f4f4;"></div><div class="a" style="left:504px;top:1032.5px;width:15px;height:8px;background:#111;border-radius:50% 50% 0 0"></div><div class="a" style="left:562px;top:1032.5px;width:1.3px;height:4px;background:#333;"></div><div class="a" style="left:574px;top:1032.5px;width:1.3px;height:4px;background:#333;"></div><div class="a" style="left:580.5px;top:1032.5px;width:1.3px;height:4px;background:#333;"></div><svg class="a" style="left:624px;top:1028px" width="26" height="8" viewBox="0 0 26 8"><path d="M1 1L14 0L12 8H0z" fill="#2a3fc0"/><path d="M15 1L24 3V8H13z" fill="#dfe3ea"/></svg><div class="a" style="left:684px;top:1026px;width:30px;height:14px;background:#1fa3d8;border-radius:50% 50% 0 0"></div><div class="a" style="left:690px;top:1032px;width:18px;height:8px;background:#35c07d;border-radius:50% 50% 0 0"></div><div class="a" style="left:746px;top:1027px;width:28px;height:14px;background:#e33b2e;border-radius:50% 50% 0 0"></div><div class="a" style="left:751px;top:1031px;width:18px;height:9px;background:#f5c518;border-radius:50% 50% 0 0"></div><div class="a" style="left:756px;top:1034px;width:8px;height:4px;background:#fff;border-radius:50% 50% 0 0"></div><div class="a" style="left:809px;top:1028px;width:27px;height:14px;background:#dc3a34;border-radius:50% 50% 0 0"></div><svg class="a" style="left:868px;top:1029px" width="28" height="7" viewBox="0 0 28 7"><path d="M0 0h11l2 2.500h15V7H0z" fill="#f2b632"/></svg><div class="a" style="left:932px;top:1032px;width:30px;height:4px;background:#fafafa;border:1px solid #ddd;border-bottom:0"></div><div class="a" style="left:994px;top:1028px;width:28px;height:8px;background:#1c97e0;"></div><div class="a" style="left:1006px;top:1030px;width:3px;height:3px;background:#fff;border-radius:50%"></div><svg class="a" style="left:1064px;top:1030px" width="20" height="6" viewBox="0 0 20 6"><path d="M0 1L18 0L20 6H2z" fill="#9aa6b0"/></svg><div class="a" style="left:1118px;top:1029px;width:26px;height:12px;background:#f5c23a;border-radius:60% 80% 0 0"></div><svg class="a" style="left:1178px;top:1027px" width="34" height="9" viewBox="0 0 34 9"><path d="M2 2L12 0L18 5V9H0z" fill="#dd2a5c"/><path d="M14 1.500L24 0.500L30 9H16z" fill="#2c5fd6"/><rect x="6" y="5.500" width="15" height="3.500" fill="#1b1b26"/></svg><svg class="a" style="left:1350px;top:1031px" width="20" height="6" viewBox="0 0 22 7"><path d="M0 3L18 0.800L20 7H2z" fill="none" stroke="#ee6a3a" stroke-width="1.600"/></svg><svg class="a" style="left:1446px;top:1031.500px" width="8" height="4.500" viewBox="0 0 8 4.500"><path d="M0 0L8 4.500H0z" fill="#f2d22e"/></svg><div class="a" style="left:1553px;top:1033px;width:8px;height:3px;background:#111;"></div><svg class="a" style="left:1578px;top:1031px" width="22" height="5" viewBox="0 0 22 5"><path d="M0 3L21 0.500V5" fill="none" stroke="#222" stroke-width="1.200"/></svg><div class="a" style="left:1608px;top:1032px;width:24px;height:6px;background:#fff;border-radius:50% 50% 0 0"></div><div class="a" style="left:1638px;top:1033px;width:12px;height:5px;background:#3fbf6a;border-radius:50% 50% 0 0"></div><div class="a" style="left:1673px;top:1033px;width:9px;height:5px;background:#111;border-radius:50% 50% 0 0"></div><div class="a" style="left:1703px;top:1033px;width:9px;height:5px;background:#111;border-radius:50% 50% 0 0"></div><span class="t" style="left:1779px;top:1022.00px;font-size:16.5px;color:#111;transform-origin:0 50%;transform:scaleX(0.9686);">22:54</span><div class="a" style="left:1862px;top:1033px;width:20px;height:3px;background:#111;"></div>
</div>
</body></html>
